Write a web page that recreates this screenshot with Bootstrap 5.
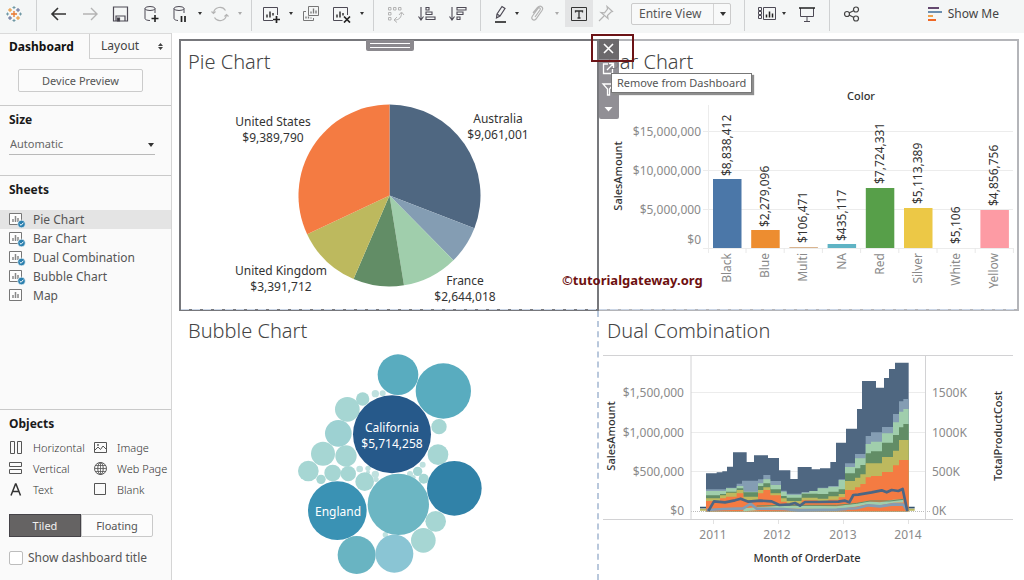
<!DOCTYPE html>
<html lang="en">
<head>
<meta charset="utf-8">
<meta name="viewport" content="width=device-width, initial-scale=1">
<title>Dashboard</title>
<link href="https://cdn.jsdelivr.net/npm/bootstrap@5.3.0/dist/css/bootstrap.min.css" rel="stylesheet">
<style>
  body { font-family: "Noto Sans", sans-serif; font-size: 12px; line-height: 16px; color: #555; background: #fff; }
  button, select { font-family: inherit; }

  /* toolbar */
  .toolstrip { background: #f4f6f6; height: 33px; padding-left: 5px; padding-right: 25px; padding-bottom: 6px; }
  .tool { border: 0; background: none; padding: 0; width: 18px; height: 27px; flex: none; display: flex; align-items: center; justify-content: center; color: #4d4a55; }
  .tool svg { width: 18px; height: 18px; flex: none; }
  .tool.drop { width: 8px; }
  .drop::before { content: ""; border: 2px solid transparent; border-top: 3px solid #333; border-bottom: 0; }
  .tool.dim { color: #b4b4b4; }
  .tool.dim::before { border-top-color: #aaa; }
  .tool.on { width: 28px; background: #e3e4e5; }
  .rule { width: 1px; height: 31px; background: #cfd1d2; flex: none; margin-left: 13px; align-self: flex-start; }
  .rule.near { margin-left: 7px; }
  .s4 { margin-left: 4px; } .s7 { margin-left: 7px; } .s10 { margin-left: 10px; } .s13 { margin-left: 13px; } .s16 { margin-left: 16px; }
  .fit { width: 100px; height: 22px; border: 1px solid #cbcbcb; border-radius: 2px; background: #f8f9f9; color: #555; font-size: 12px; padding: 0 7px; appearance: none; }
  .fitbox { position: relative; flex: none; }
  .fitbox::after { content: ""; position: absolute; right: 5px; top: 9px; border: 3px solid transparent; border-top: 4px solid #333; border-bottom: 0; pointer-events: none; }
  .fitbox::before { content: ""; position: absolute; right: 17px; top: 1px; bottom: 1px; width: 1px; background: #d4d4d4; }
  .showme { border: 0; background: none; padding: 0; color: #444; height: 27px; }

  /* side pane */
  .side { width: 172px; flex: none; background: #fafafa; border-right: 1px solid #d5d5d5; }
  .tabs { border-top: 1px solid #dadada; }
  .tabs button { border: 0; background: none; height: 25px; padding: 0; color: #444; font-size: 12px; }
  .tabs .now { width: 89px; padding-left: 9px; text-align: left; font-weight: 700; color: #111; }
  .tabs .other { border-left: 1px solid #cfcfcf; border-bottom: 1px solid #cfcfcf; padding: 0 8px 0 11px; }
  .preview { margin: 10px 28px 13px 18px; height: 23px; font-size: 11px; border: 1px solid #cbcbcb; border-radius: 2px; background: #fbfbfb; color: #555; padding: 0; }
  .sect { border-top: 1px solid #c9c9c9; padding-top: 6px; }
  .side h3 { font-size: 12px; line-height: 16px; font-weight: 700; color: #1a1a1a; margin: 0 0 0 9px; }
  .size { display: block; width: 146px; height: 22px; margin: 5px 0 20px 9px; border: 0; border-bottom: 1px solid #b9b9b9; background: transparent; appearance: none; font-size: 11px; color: #666; padding: 0 1px; }
  .sizebox { position: relative; }
  .sizebox::after { content: ""; position: absolute; left: 148px; top: 10px; border: 3px solid transparent; border-top: 4px solid #333; border-bottom: 0; pointer-events: none; }
  .sheets { margin: 12px 0 0; }
  .sheets a { display: flex; align-items: center; height: 19px; padding-left: 9px; gap: 7px; color: #555; text-decoration: none; }
  .sheets a.picked { background: #e4e4e4; }
  .sheets svg { width: 17px; height: 17px; }
  .objs { display: grid; grid-template-columns: 84px 1fr; padding-left: 9px; margin-top: 5px; font-size: 11px; }
  .objs button { display: flex; align-items: center; gap: 9px; height: 21px; border: 0; background: none; padding: 0; color: #333; font-weight: 300; white-space: nowrap; }
  .objs svg { width: 15px; height: 15px; flex: none; color: #555; }
  .mode { margin: 14px 18px 13px 9px; height: 23px; }
  .mode button { flex: 1 1 0; border: 1px solid #c9c9c9; background: #fcfcfc; color: #555; font-size: 11px; padding: 0; border-radius: 0 2px 2px 0; }
  .mode .act { background: #656363; border-color: #454348; color: #f1f1f1; border-radius: 0; }
  .showtitle { gap: 5px; padding: 0 0 14px 9px; }
  .showtitle input { appearance: none; width: 14px; height: 14px; border: 1px solid #bdbdbd; border-radius: 2px; background: #fff; margin: 0; }

  /* dashboard sheets */
  .board { display: grid; grid-template-columns: 1fr 1fr; padding: 6px 5px 0 7px; align-content: start; min-width: 0; }
  .pane { position: relative; min-width: 0; }
  .pane h2 { font-size: 20px; line-height: 30px; font-weight: 300; color: #444; margin: 0; padding-left: 9px; }
  .pane > svg { display: block; width: 100%; height: auto; }
  .pie { border: 2px solid #77787c; padding: 6px 0 1px; }
  .pane.pie h2 { padding-left: 7px; }
  .bar { border: 2px solid #b4b5b9; border-left: 0; padding: 6px 0 1px; }
  .pane.bar h2, .pane.dual h2 { padding-left: 8px; }
  .pie::after, .bar::after { content: ""; position: absolute; left: 0; right: 0; bottom: -1px; height: 1px; background: repeating-linear-gradient(90deg, #cbd6e6 0 8px, transparent 8px 11px); }
  .bubble { padding-top: 5px; border-right: 2px dashed #b9c8dc; }
  .dual { padding-top: 5px; }
  .handle { position: absolute; left: 185px; top: -1px; width: 48px; height: 11px; background: #8b898e; border-radius: 0 0 2px 2px; padding: 3px 4px; }
  .handle::before { content: ""; display: block; height: 5px; border: solid #fff; border-width: 1px 0; }
  .acts { position: absolute; left: 0; top: -2px; width: 20px; height: 80px; background: #858389e6; border-radius: 0 0 2px 2px; }
  .acts button { display: block; border: 0; padding: 0; width: 20px; height: 20px; background: none; color: #fff; }
  .acts button:first-child { background: #6b696c; }
  .acts svg { width: 19px; height: 20px; display: block; }
  .tip { position: absolute; left: 12px; top: 32px; height: 20px; padding: 0 5px; line-height: 18px; font-size: 11px; background: #fff; color: #555; border: 1px solid #777; box-shadow: 2px 2px 1px #8d8d8d; white-space: nowrap; }
  .ring { position: absolute; left: -8px; top: -7px; width: 43px; height: 28px; border: 2px solid #6c1316; }
  .credit { position: absolute; left: -37px; bottom: 21px; font-size: 13px; font-weight: 700; color: #6d1010; }

  svg text { font-family: "Noto Sans", sans-serif; font-size: 12px; fill: #333; }
  svg .tick { fill: #8a8a8a; font-size: 12px; }
  svg .mid { text-anchor: middle; } svg .end { text-anchor: end; }
  svg .axis { font-size: 11px; font-weight: 500; fill: #333; text-anchor: middle; }
</style>
</head>
<body>
<svg width="0" height="0" class="position-absolute" aria-hidden="true">
  <symbol id="sheet" viewBox="0 0 17 17"><path d="M.5 2.500h12v11H.5z" fill="#fdfdfd" stroke="#777"/><path d="M4 11V8M6.500 11V5M9 11V7" stroke="#888" stroke-width="1.500"/></symbol>
  <symbol id="used" viewBox="0 0 17 17"><use href="#sheet"/><circle cx="12.500" cy="13" r="3.800" fill="#2a7fae" stroke="#fff" stroke-width=".6"/><path d="m10.700 13 1.400 1.300 2.300-2.600" fill="none" stroke="#fff"/></symbol>
</svg>
<div class="d-flex flex-column min-vh-100">
<header class="toolstrip d-flex align-items-center" role="toolbar" aria-label="Main toolbar">
  <button class="tool" aria-label="Start"><svg viewBox="0 0 18 18" fill="none"><path d="M9 6v6M6 9h6" stroke="#e8762c" stroke-width="1.300"/><path d="M9 1v3M7.500 2.500h3M9 14v3M7.500 15.500h3" stroke="#7099a5"/><path d="M1 9h3M2.500 7.500v3M14 9h3M15.500 7.500v3" stroke="#7099a5"/><path d="M5 3v4M3 5h4M13 11v4M11 13h4" stroke="#eb912c"/><path d="M13 3v4M11 5h4M5 11v4M3 13h4" stroke="#5c6692"/></svg></button>
  <span class="rule"></span>
  <button class="tool s13" aria-label="Undo"><svg viewBox="0 0 18 18" fill="none" stroke="#333" stroke-width="1.600"><path d="M16 9H2M8 3 2 9l6 6"/></svg></button>
  <button class="tool dim s13" aria-label="Redo"><svg viewBox="0 0 18 18" fill="none" stroke="currentColor" stroke-width="1.400"><path d="M2 9h14M10 3l6 6-6 6"/></svg></button>
  <button class="tool s13" aria-label="Save"><svg viewBox="0 0 18 18" fill="none" stroke="currentColor" stroke-width="1.200"><path d="M1.500 2h14v14h-14z"/><path d="M4 16v-5h9v5"/><path d="M5.500 13h2v3h-2z" fill="#333"/></svg></button>
  <button class="tool s13" aria-label="New data source"><svg viewBox="0 0 18 18" fill="none" stroke="currentColor"><ellipse cx="7" cy="3.500" rx="5" ry="2"/><path d="M2 3.500v10c0 1 2 2 5 2M12 3.500V8"/><path d="M12 10v7M8.500 13.500h7" stroke="#222" stroke-width="1.600"/></svg></button>
  <button class="tool s10" aria-label="Pause updates"><svg viewBox="0 0 18 18" fill="none" stroke="currentColor"><ellipse cx="8" cy="3.500" rx="5" ry="2"/><path d="M3 3.500v10c0 1 2 2 4 2M13 3.500V8"/><path d="M10.500 11v6M14 11v6" stroke="#222" stroke-width="1.700"/></svg></button>
  <button class="tool drop s7" aria-label="Update options"></button>
  <button class="tool dim s7" aria-label="Refresh"><svg viewBox="0 0 18 18" fill="none" stroke="currentColor" stroke-width="1.200"><path d="M2.500 8a6.500 6.500 0 0 1 12-2.500M15.500 10a6.500 6.500 0 0 1-12 2.500"/><path d="M.5 6.500l2 2 2-2M13.500 11.500l2-2 2 2"/></svg></button>
  <button class="tool drop dim s7" aria-label="Refresh options"></button>
  <span class="rule near"></span>
  <button class="tool s10" aria-label="New worksheet"><svg viewBox="0 0 18 18" fill="none" stroke="currentColor"><path d="M11 15.500H1.500v-13h14V10"/><path d="M5 12.500v-3M8 12.500v-6M11 10.500V8" stroke="#333" stroke-width="1.500"/><path d="M14.500 11v7M11 14.500h7" stroke="#222" stroke-width="1.700"/></svg></button>
  <button class="tool drop s7" aria-label="New sheet options"></button>
  <button class="tool s7" aria-label="Duplicate"><svg viewBox="0 0 18 18" fill="none" stroke="#777"><path d="M6.500 1.500h10v9h-10zM4 6.500H1.500v9h10V13"/><path d="M9 8.500v-2M11.500 8.500v-5M14 8.500v-3M4 13.500v-2M6.500 13.500v-2M9 13.500v-1" stroke-width="1.300"/></svg></button>
  <button class="tool s13" aria-label="Clear sheet"><svg viewBox="0 0 18 18" fill="none" stroke="currentColor"><path d="M9.500 15.500h-9v-13h14V10"/><path d="M4 12.500v-3M7 12.500v-6M10 10.500V8" stroke="#333" stroke-width="1.500"/><path d="m11 11.500 6 6M17 11.500l-6 6" stroke="#222" stroke-width="1.700"/></svg></button>
  <button class="tool drop s7" aria-label="Clear options"></button>
  <span class="rule near"></span>
  <button class="tool dim s13" aria-label="Swap rows and columns"><svg viewBox="0 0 18 18" fill="none" stroke="currentColor"><path d="M1.500 2.500h2.500v2.500H1.500zM6.500 2.500H9v2.500H6.500zM11.500 2.500H14v2.500h-2.500zM1.500 7.500h2.500V10H1.500zM1.500 12.500h2.500V15H1.500z"/><path d="M14.500 8c0 4-2 7-7 7m2.500-3-3 3 3 2.500M12 10l2.500-3 2.500 3"/></svg></button>
  <button class="tool s13" aria-label="Sort ascending"><svg viewBox="0 0 18 18" fill="none" stroke="currentColor" stroke-width="1.100"><path d="M3 2v12M.5 11.500 3 15l2.500-3.500"/><path d="M8 2.500h3v2.500H8zM8 7h6v2.500H8zM8 12h9v2.500H8z"/></svg></button>
  <button class="tool s13" aria-label="Sort descending"><svg viewBox="0 0 18 18" fill="none" stroke="currentColor" stroke-width="1.100"><path d="M3 2v12M.5 11.500 3 15l2.500-3.500"/><path d="M8 2.500h9v2.500H8zM8 7h6v2.500H8zM8 12h3v2.500H8z"/></svg></button>
  <span class="rule"></span>
  <button class="tool s10" aria-label="Highlight"><svg viewBox="0 0 18 18" fill="none" stroke="currentColor" stroke-width="1.200"><path d="m6 9 5-7.500 3 2-5 7.500-3.500 2zM6 9l3 2"/><path d="M4 17h11" stroke="#222" stroke-width="1.600"/></svg></button>
  <button class="tool drop s4" aria-label="Highlight options"></button>
  <button class="tool dim s7" aria-label="Group members"><svg viewBox="0 0 18 18" fill="none" stroke="currentColor" stroke-width="1.200"><path d="m7 12 5-7c1-2-1-3-2-1.500L4.500 11c-2 3 1 5.500 3.500 3l6-8.500c2-3-1.500-6-4.500-3L5 8"/></svg></button>
  <button class="tool drop dim s7" aria-label="Group options"></button>
  <button class="tool on s4" aria-label="Show mark labels" aria-pressed="true"><svg viewBox="0 0 18 18" fill="none" stroke="#333"><path d="M1.500 2.500h15v13h-15z"/><path d="M5.500 7.500V6h7v1.500M9 6v7M7.500 13h3" stroke-width="1.300"/></svg></button>
  <button class="tool dim s4" aria-label="Fix axes"><svg viewBox="0 0 18 18" fill="none" stroke="currentColor" stroke-width="1.200"><path d="m10 1.500 5.500 5-1.500.5-3.500 3.500.5 3L4 7.500l3.500.3L10.500 4zM7 11l-5 5"/></svg></button>
  <div class="fitbox s16"><select class="fit" aria-label="Fit"><option>Entire View</option></select></div>
  <span class="rule"></span>
  <button class="tool s13" aria-label="Show cards"><svg viewBox="0 0 18 18" fill="none" stroke="currentColor"><path d="M5.500 2.500h12v12h-12zM.5 2.500h3v3h-3zM.5 6.500h3v3h-3zM.5 10.500h3v3h-3z"/><path d="M8.500 12.500v-3M11.500 12.500v-6M14.500 12.500V8.500" stroke="#222" stroke-width="1.500"/></svg></button>
  <button class="tool drop s4" aria-label="Card options"></button>
  <button class="tool s10" aria-label="Presentation mode"><svg viewBox="0 0 18 18" fill="none" stroke="currentColor"><path d="M2.500 3v8.500h13V3M9 11.500V16M6 16.500h6"/><path d="M1 3h16" stroke="#222" stroke-width="1.500"/></svg></button>
  <span class="rule"></span>
  <button class="tool s13" aria-label="Share"><svg viewBox="0 0 18 18" fill="none" stroke="#444" stroke-width="1.200"><circle cx="4" cy="9" r="2.500"/><circle cx="13" cy="4.500" r="2.500"/><circle cx="13" cy="13.500" r="2.500"/><path d="m6 8 5-2.500M6 10l5 2.500"/></svg></button>
  <button class="showme ms-auto d-flex align-items-center gap-1"><svg width="16" height="16" viewBox="0 0 16 16"><path d="M0 1h11v2H0z" fill="#64496f"/><path d="M0 5h14v2H0z" fill="#6b8fb0"/><path d="M0 9h5v2H0z" fill="#efa24b"/><path d="M0 13h8v2H0z" fill="#ef6725"/></svg><span>Show Me</span></button>
</header>

<div class="d-flex flex-grow-1">
<aside class="side d-flex flex-column">
  <div class="tabs d-flex">
    <button class="now">Dashboard</button>
    <button class="other flex-grow-1 d-flex align-items-center justify-content-between">Layout <svg width="5" height="7" viewBox="0 0 5 7"><path d="M2.500 0 5 3H0zM2.500 7 5 4H0z" fill="#444"/></svg></button>
  </div>
  <button class="preview">Device Preview</button>
  <section class="sect">
    <h3><label for="size">Size</label></h3>
    <div class="sizebox"><select class="size" id="size"><option>Automatic</option></select></div>
  </section>
  <section class="sect">
    <h3>Sheets</h3>
    <nav class="sheets">
      <a href="#" class="picked"><svg><use href="#used"/></svg>Pie Chart</a>
      <a href="#"><svg><use href="#used"/></svg>Bar Chart</a>
      <a href="#"><svg><use href="#used"/></svg>Dual Combination</a>
      <a href="#"><svg><use href="#used"/></svg>Bubble Chart</a>
      <a href="#"><svg><use href="#sheet"/></svg>Map</a>
    </nav>
  </section>
  <section class="sect mt-auto">
    <h3>Objects</h3>
    <div class="objs">
      <button><svg viewBox="0 0 15 15" fill="none" stroke="currentColor"><path d="M1.500 1.500h4v12h-4zM8.500 1.500h4v12h-4z"/></svg>Horizontal</button>
      <button><svg viewBox="0 0 15 15" fill="none" stroke="currentColor"><path d="M1.500 2.500h12v10h-12z"/><path d="m2 10 3-3 2.500 2.500L10 6l3.500 3.500"/><circle cx="5" cy="5" r=".6"/></svg>Image</button>
      <button><svg viewBox="0 0 15 15" fill="none" stroke="currentColor"><path d="M.5 1.500h12v4H.5zM.5 8.500h12v4H.5z"/></svg>Vertical</button>
      <button><svg viewBox="0 0 15 15" fill="none" stroke="currentColor"><circle cx="7.500" cy="7.500" r="6"/><ellipse cx="7.500" cy="7.500" rx="2.700" ry="6"/><path d="M1.500 7.500h12M2.500 4.500h10M2.500 10.500h10M7.500 1.500v12" stroke-width=".8"/></svg>Web Page</button>
      <button><svg viewBox="0 0 15 15" fill="none" stroke="#333" stroke-width="1.500"><path d="M2 13.500 6.500 2h.5l4.500 11.500M3.500 9.500H10"/></svg>Text</button>
      <button><svg viewBox="0 0 15 15" fill="none" stroke="currentColor"><path d="M1.500 1.500h11v11h-11z"/></svg>Blank</button>
    </div>
    <div class="mode d-flex"><button class="act" aria-pressed="true">Tiled</button><button>Floating</button></div>
    <div class="showtitle d-flex align-items-center"><input type="checkbox" id="dt"><label for="dt">Show dashboard title</label></div>
  </section>
</aside>

<main class="board flex-grow-1">
  <section class="pane pie">
    <h2>Pie Chart</h2>
    <span class="handle"></span>
    <svg viewBox="181 77 416 231" role="img" aria-label="Sales by country">
      <g id="slices"></g>
      <g class="mid"><text x="273" y="126">United States</text><text x="273" y="142">$9,389,790</text>
      <text x="498" y="123">Australia</text><text x="498" y="139">$9,061,001</text>
      <text x="281" y="275">United Kingdom</text><text x="281" y="291">$3,391,712</text>
      <text x="465" y="285">France</text><text x="465" y="301">$2,644,018</text></g>
    </svg>
  </section>

  <section class="pane bar">
    <h2>Bar Chart</h2>
    <svg viewBox="599 77 418 231" role="img" aria-label="Sales amount by color">
      <path d="M703 131.500h310M703 170.500h310M703 209.500h310M703 248.500h310M708.500 105v148" stroke="#ececec" fill="none"/>
      <text x="861" y="100" class="axis">Color</text>
      <text transform="translate(622 176) rotate(-90)" class="axis">SalesAmount</text>
      <g class="end"><text class="tick" x="701" y="136">$15,000,000</text><text class="tick" x="701" y="175">$10,000,000</text><text class="tick" x="701" y="214">$5,000,000</text><text class="tick" x="701" y="244">$0</text></g>
      <g id="bars"></g>
    </svg>
    <div class="acts">
      <button aria-label="Remove from Dashboard"><svg viewBox="0 0 19 20" fill="none" stroke="#fff" stroke-width="1.600"><path d="m5 5 9 9M14 5l-9 9"/></svg></button>
      <button aria-label="Go to sheet"><svg viewBox="0 0 19 20" fill="none" stroke="#fff" stroke-width="1.300"><path d="M9 5H4.500v9.500h9V10M8 11l6-6M10 4.500h4.500V9"/></svg></button>
      <button aria-label="Use as filter"><svg viewBox="0 0 19 20" fill="none" stroke="#fff" stroke-width="1.300"><path d="M4 5h11l-4.500 5v6h-2v-6z"/></svg></button>
      <button aria-label="More options"><svg viewBox="0 0 19 20"><path d="M5.500 8h8l-4 4.500z" fill="#fff"/></svg></button>
    </div>
    <div class="tip" role="tooltip">Remove from Dashboard</div>
    <div class="ring"></div>
    <div class="credit">©tutorialgateway.org</div>
  </section>

  <section class="pane bubble">
    <h2>Bubble Chart</h2>
    <svg viewBox="179 346 418 234" role="img" aria-label="Sales by region">
      <g id="bubbles" transform="translate(280 340) scale(.33333)"></g>
      <g class="mid"><text x="392" y="432" style="fill:#fff">California</text><text x="392" y="448" style="fill:#fff">$5,714,258</text><text x="338" y="516" style="fill:#fff">England</text></g>
    </svg>
  </section>

  <section class="pane dual">
    <h2>Dual Combination</h2>
    <svg viewBox="599 346 420 234" role="img" aria-label="Sales amount and total product cost by month">
      <path d="M691 392.500h234M691 432.500h234M691 471.500h234" stroke="#ececec"/>
      <path d="M691 511.500h240" stroke="#bbb" stroke-dasharray="1 1"/>
      <g transform="translate(690 350) scale(.33333)" fill="none">
        <g id="layers"></g>
        <path d="M30 473h18M656 473h18" stroke="#33536f" stroke-width="5"/>
        <path d="M30 479h18M656 479h18" stroke="#bdb95e" stroke-width="6"/>
        <g stroke-linejoin="round" stroke-width="6">
          <path d="M160 479 280 471 440 473 500 465 530 458 570 461 610 454 640 453" stroke="#a0ceac" stroke-width="9"/>
          <path d="M200 468 280 466 440 466 500 460 540 453 600 453 640 448" stroke="#628d66" stroke-width="3"/>
          <path d="M50 480 100 477 160 475 182 461 200 476 280 477 325 481 440 479 500 475 535 466 570 469 610 463 640 464 652 482" stroke="#849db3" stroke-width="8"/>
          <path d="M470 481H640" stroke="#f47b42" stroke-width="4"/>
          <path d="M55 483 72 454 105 457 135 451 152 446 175 455 210 452 245 454 268 465 300 463 315 459 330 467 345 456 380 456 445 455 465 452 478 457 490 435 505 434 545 427 575 421 590 427 605 420 625 423 638 417 652 483" stroke="#4b6684" stroke-width="8"/>
        </g>
      </g>
      <path d="M603 355.500h410M603 519.500h410M691 355.500v164M925.500 355.500v164" stroke="#d2d2d4" fill="none"/>
      <path d="M713.500 520v4M778.500 520v4M843.500 520v4M908.500 520v4" stroke="#e2e2e2"/>
      <g class="end"><text class="tick" x="684" y="397">$1,500,000</text><text class="tick" x="684" y="437">$1,000,000</text><text class="tick" x="684" y="476">$500,000</text><text class="tick" x="684" y="515">$0</text></g>
      <text class="tick" x="932" y="397">1500K</text><text class="tick" x="932" y="437">1000K</text><text class="tick" x="932" y="476">500K</text><text class="tick" x="932" y="515">0K</text>
      <g class="mid"><text class="tick" x="713" y="539">2011</text><text class="tick" x="777" y="539">2012</text><text class="tick" x="843" y="539">2013</text><text class="tick" x="908" y="539">2014</text></g>
      <text class="axis" x="807" y="562">Month of OrderDate</text>
      <text class="axis" transform="translate(615 436) rotate(-90)">SalesAmount</text>
      <text class="axis" transform="translate(1002 436) rotate(-90)">TotalProductCost</text>
    </svg>
  </section>
</main>
</div>
</div>
<script src="https://cdn.jsdelivr.net/npm/bootstrap@5.3.0/dist/js/bootstrap.bundle.min.js"></script>
<script>
  // Pie: sales per country, clockwise from twelve o'clock
  const countries = [[9061001,'#4f6781'],[1977845,'#849db3'],[2894312,'#a0ceac'],[2644018,'#628d66'],[3391712,'#bdb95e'],[9389790,'#f47b42']];
  const total = countries.reduce((s, c) => s + c[0], 0), cx = 389.5, cy = 195.5, r = 91;
  let turn = 0, out = '';
  for (const [v, fill] of countries) {
    const at = t => `${cx + r * Math.sin(t * 2 * Math.PI)} ${cy - r * Math.cos(t * 2 * Math.PI)}`;
    out += `<path fill="${fill}" d="M${cx} ${cy}L${at(turn)}A${r} ${r} 0 0 1 ${at(turn + v / total)}z"/>`;
    turn += v / total;
  }
  document.getElementById('slices').innerHTML = out;

  // Bars: name, label, colour, bar height, label start
  const colors = [['Black','$8,838,412','#4b77a8',69,176],['Blue','$2,279,096','#ed8d30',18,227],['Multi','$106,471','#d9b48f',1,243],['NA','$435,117','#5fb3c4',4,241],['Red','$7,724,331','#579f49',60,184],['Silver','$5,113,389','#ecc846',40,204],['White','$5,106','#fff',0,244],['Yellow','$4,856,756','#fd9ba4',38,206]];
  document.getElementById('bars').innerHTML = colors.map(([n, l, c, h, y], i) => {
    const x = 713 + i * 38.2;
    return `<rect x="${x}" y="${248 - h}" width="28.500" height="${h}" fill="${c}"/>` +
      `<path d="M${x + 33} 248v5" stroke="#e8e8e8"/>` +
      `<text transform="translate(${x + 18} ${y}) rotate(-90)">${l}</text>` +
      `<text class="tick end" transform="translate(${x + 18} 253) rotate(-90)">${n}</text>`;
  }).join('');

  // Bubbles: x, y, radius, colour
  const pale = '#a6d6d3', mid = '#59acbf';
  document.getElementById('bubbles').innerHTML = [[354,104,61,mid],[490,153,83,mid],[202,208,37],[248,177,20],[286,161,11],[308,160,9],[175,280,40,'#9dd1d2'],[129,341,36],[198,348,32],[85,393,31],[123,418,14],[158,399,25],[205,401,23],[239,387,10],[264,385,8],[264,397,6],[254,425,28],[286,403,11],[288,418,8],[477,260,23],[474,344,31],[428,374,9],[413,394,14],[431,416,15],[390,402,9],[400,412,7],[316,584,8],[336,283,117,'#26598a'],[523,445,82,'#3182a8'],[172,512,88,'#3a92b4'],[355,493,92,'#6cb6c3'],[467,544,31],[430,601,37],[230,645,57,'#69b4c2'],[343,641,57,'#8ac5d4']]
    .map(([x, y, q, c]) => `<circle cx="${x}" cy="${y}" r="${q}" fill="${c || (q < 12 ? '#bfe1df' : pale)}"/>`).join('');

  // Stacked months: start of each step and its top edge, back layer first
  const steps = [
    ['#4f6781', '48,370 80,367 97,364 111,350 129,307 170,336 192,316 234,324 267,361 301,387 323,351 365,358 390,355 421,336 438,278 468,236 501,177 516,93 558,113 582,84 597,57 615,38'],
    ['#849db3', '48,418 108,413 140,401 156,392 204,388 220,375 241,393 273,422 290,431 335,426 358,423 383,413 415,408 446,388 465,340 495,312 527,258 543,247 576,231 609,192 627,154 640,147'],
    ['#a0ceac', '48,423 108,415 140,408 160,425 204,400 220,388 241,405 273,425 290,434 335,428 358,423 383,415 415,410 446,390 465,351 495,325 527,282 543,275 576,250 609,217 627,185 640,177'],
    ['#628d66', '48,436 90,432 108,425 140,415 160,427 204,408 220,400 241,418 273,438 290,443 335,431 383,432 415,425 446,418 465,370 495,355 511,345 527,310 543,304 576,278 609,255 627,232 640,222'],
    ['#bdb95e', '48,445 90,436 108,428 140,420 160,440 204,420 220,412 241,430 273,445 290,453 335,443 383,446 415,439 446,432 465,393 495,383 511,373 527,340 576,321 609,302 627,270'],
    ['#f47b42', '48,453 90,445 108,440 140,430 160,452 204,430 220,420 241,436 273,455 290,461 335,451 383,456 415,449 446,442 465,420 495,412 511,402 527,382 543,378 576,366 609,346 627,330']
  ];
  document.getElementById('layers').innerHTML = steps.map(([c, s]) =>
    `<path fill="${c}" d="M48 484${s.split(' ').map(p => { const [x, y] = p.split(','); return `H${x}V${y}`; }).join('')}H656V484z"/>`).join('');
</script>
</body>
</html>
